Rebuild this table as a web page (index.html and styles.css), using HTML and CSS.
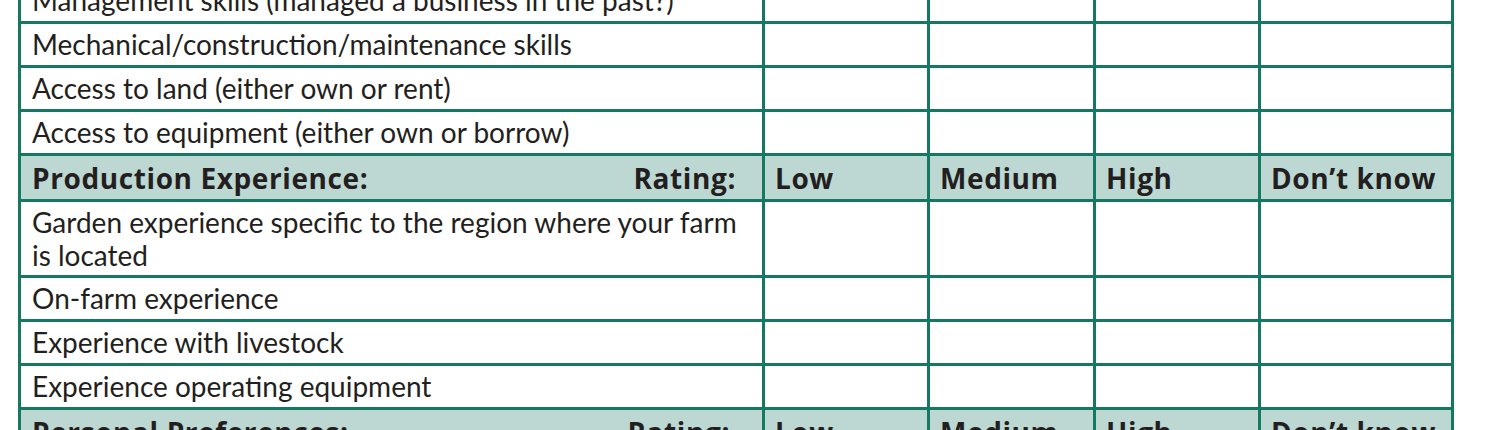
FILE: index.html
```html
<!DOCTYPE html>
<html>
<head>
<meta charset="utf-8">
<link rel="stylesheet" href="styles.css">
</head>
<body>
<div class="grid">
  <div class="cell label">Management skills (managed a business in the past?)</div><div class="cell"></div><div class="cell"></div><div class="cell"></div><div class="cell"></div>
  <div class="cell label">Mechanical/construction/maintenance skills</div><div class="cell"></div><div class="cell"></div><div class="cell"></div><div class="cell"></div>
  <div class="cell label">Access to land (either own or rent)</div><div class="cell"></div><div class="cell"></div><div class="cell"></div><div class="cell"></div>
  <div class="cell label">Access to equipment (either own or borrow)</div><div class="cell"></div><div class="cell"></div><div class="cell"></div><div class="cell"></div>
  <div class="cell head head-label"><span>Production Experience:</span><span>Rating:</span></div><div class="cell head">Low</div><div class="cell head">Medium</div><div class="cell head">High</div><div class="cell head">Don’t know</div>
  <div class="cell label">Garden experience specific to the region where your farm is located</div><div class="cell"></div><div class="cell"></div><div class="cell"></div><div class="cell"></div>
  <div class="cell label">On-farm experience</div><div class="cell"></div><div class="cell"></div><div class="cell"></div><div class="cell"></div>
  <div class="cell label">Experience with livestock</div><div class="cell"></div><div class="cell"></div><div class="cell"></div><div class="cell"></div>
  <div class="cell label">Experience operating equipment</div><div class="cell"></div><div class="cell"></div><div class="cell"></div><div class="cell"></div>
  <div class="cell head head-label head-alt"><span>Personal Preferences:</span><span>Rating:</span></div><div class="cell head">Low</div><div class="cell head">Medium</div><div class="cell head">High</div><div class="cell head">Don’t know</div>
</div>
</body>
</html>
```

FILE: styles.css
```css
html, body {
  margin: 0;
  padding: 0;
  background: #ffffff;
  overflow: hidden;
}

body {
  font-family: Lato, "Open Sans", sans-serif;
  color: #231f20;
}

.grid {
  display: grid;
  grid-template-columns: 741px 162px 163px 162px 190px;
  gap: 3px;
  padding: 3px;
  width: max-content;
  background: #157863;
  margin-left: 18px;
  margin-top: -23px;
}

.cell {
  background: #ffffff;
  min-height: 41px;
  box-sizing: border-box;
  padding: 4px 12px 3px 11px;
  font-size: 28px;
  line-height: 33px;
}

.label {
  padding-right: 20px;
}

.head {
  background: #bdd8d2;
  font-family: "Open Sans", Lato, sans-serif;
  font-weight: 700;
  font-size: 28px;
  letter-spacing: 0.6px;
  padding-top: 6px;
  padding-bottom: 4px;
  padding-left: 10px;
  min-height: 43px;
}

.head-label {
  display: flex;
  justify-content: space-between;
  padding-left: 11px;
  padding-right: 26px;
}

.head-alt {
  padding-right: 32px;
}
```
